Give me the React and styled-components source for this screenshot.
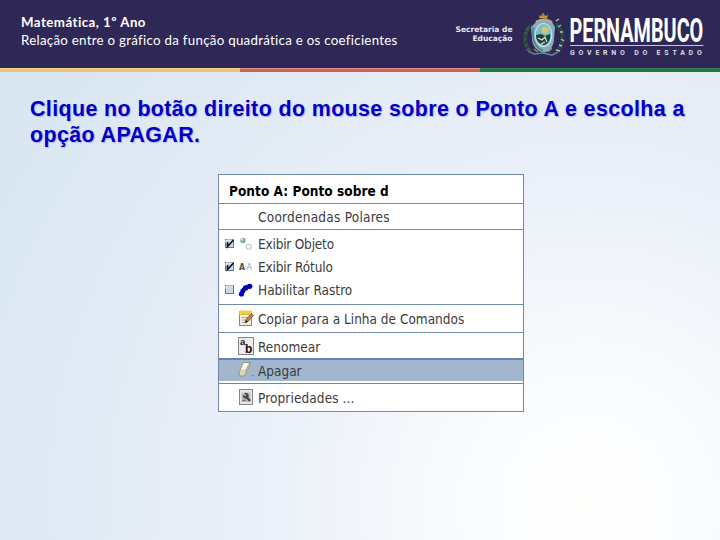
import styled, { createGlobalStyle } from "styled-components";

const GlobalStyle = createGlobalStyle`
	* {
		box-sizing: border-box;
	}
	body {
		margin: 0;
	}
`;

const Slide = styled.div`
	display: flex;
	flex-direction: column;
	width: 720px;
	height: 540px;
	overflow: hidden;
	background: radial-gradient(
		circle at 588px 503px,
		#fffefc 0,
		#fefefe 20px,
		#fcfdfe 80px,
		#f8fafc 150px,
		#f2f5fb 230px,
		#e9eff8 350px,
		#e2ebf5 500px,
		#d8e6f2 700px
	);
`;

const Header = styled.header`
	display: flex;
	justify-content: space-between;
	height: 68px;
	background: #2f2755;
`;

const Heading = styled.div`
	padding: 13px 0 0 21px;
	font-family: Lato, sans-serif;
	color: #fff;
`;

const HeadingLine = styled.p`
	margin: 0;
	font-size: 13.3px;
	line-height: 18px;
	font-weight: ${({ $bold }) => ($bold ? 700 : 400)};
	letter-spacing: ${({ $spacing }) => $spacing}px;
	white-space: nowrap;
`;

const Logo = styled.svg`
	display: block;
	width: 280px;
	height: 68px;
`;

const Stripe = styled.div`
	display: grid;
	grid-template-columns: repeat(3, 1fr);
	height: 4px;
`;

const StripePart = styled.div`
	border-top: 1px solid ${({ $edge }) => $edge};
	background: ${({ $color }) => $color};
`;

const Instruction = styled.p`
	margin: 24px 0 0 30px;
	font-family: "Liberation Sans", Arial, sans-serif;
	font-size: 21.4px;
	font-weight: bold;
	line-height: 26px;
	letter-spacing: 0.4px;
	color: #0000c4;
	text-shadow: 1px 1px 1px #b4b4f4;
	white-space: nowrap;
`;

const Menu = styled.div`
	width: 306px;
	height: 238px;
	margin: 26px 0 0 218px;
	border: 1px solid #7188a6;
	background: #fff;
	font-family: "DejaVu Sans Condensed", "DejaVu Sans", sans-serif;
	font-stretch: condensed;
	font-size: 13.5px;
	color: #3c3c3c;
`;

const MenuTitle = styled.div`
	height: 28px;
	padding: 4px 0 0 10px;
	line-height: 25px;
	font-weight: bold;
	font-size: 13.5px;
	letter-spacing: 0.05px;
	color: #000;
`;

const Group = styled.div`
	height: ${({ $height }) => $height}px;
	padding-top: ${({ $top }) => $top || 0}px;
	border-top: 1px solid #7188a6;
`;

const MenuItem = styled.div`
	display: grid;
	grid-template-columns: 13px 20px 1fr;
	align-items: center;
	height: ${({ $height }) => $height || 23}px;
	padding-left: 6px;
	border-top: ${({ $selected }) => ($selected ? "2px solid #6482b4" : "0")};
	background: ${({ $selected }) => ($selected ? "#a2b6cd" : "transparent")};
`;

const Label = styled.span`
	letter-spacing: ${({ $spacing }) => $spacing || 0}px;
	white-space: nowrap;
`;

const Icon = styled.svg`
	display: block;
	overflow: visible;
`;

function Checkbox({ checked }) {
	return (
		<Icon width="10" height="10" viewBox="0 0 10 10">
			<rect x="0.5" y="0.5" width="8" height="8" fill="#cbd8e6" stroke="#65788e" />
			<path d="M1 4V1h7" fill="none" stroke="#eef4fa" />
			{checked && <path d="M2.5 3v4.5L8.5 1" fill="none" stroke="#15171c" strokeWidth="1.7" />}
		</Icon>
	);
}

function ObjectIcon() {
	return (
		<Icon width="16" height="16" viewBox="-1 0 16 16">
			<circle cx="4" cy="4.5" r="2.7" fill="#86a6a6" />
			<circle cx="3.2" cy="3.6" r="1.2" fill="#d9e8e8" />
			<circle cx="9.8" cy="10.8" r="2.5" fill="#fff" stroke="#bfc4bf" strokeWidth="1.1" />
		</Icon>
	);
}

function LabelIcon() {
	return (
		<Icon width="16" height="16" viewBox="0 0 16 16" fontFamily="DejaVu Sans" fontSize="9">
			<text x="1" y="11" fontWeight="bold" fill="#505050" textLength="6" lengthAdjust="spacingAndGlyphs">A</text>
			<text x="8.5" y="11" fill="#a6a6a6" textLength="5.5" lengthAdjust="spacingAndGlyphs">A</text>
		</Icon>
	);
}

function TraceIcon() {
	return (
		<Icon width="16" height="16" viewBox="0 0 16 16">
			<path d="M3.5 12l1.500-3.500 3-3 3.500-1.500" fill="none" stroke="#0000b4" strokeWidth="4" />
			<g fill="#0000b4">
				<circle cx="3.5" cy="12" r="2.6" />
				<circle cx="4.9" cy="8.9" r="2.5" />
				<circle cx="7.6" cy="5.9" r="2.7" />
				<circle cx="11.8" cy="4.3" r="2.6" />
			</g>
		</Icon>
	);
}

function NotepadIcon() {
	return (
		<Icon width="17" height="18" viewBox="0 1 17 18">
			<rect x="1.5" y="3.5" width="12" height="13" fill="#f3efe4" stroke="#8d8573" />
			<rect x="1" y="2" width="13" height="4" fill="#e3b93c" />
			<path d="M2.5 1v4M5 1v4M7.5 1v4M10 1v4M12.5 1v4" stroke="#f7dc62" strokeWidth="1.2" />
			<path d="M3.5 8.5h7M3.5 11h4M3.5 13.5h3" stroke="#aaa69a" />
			<path d="M7 14l1-3.5L13.5 4.5l2 2L10 12.5z" fill="#c28a3e" stroke="#5d4321" strokeWidth="0.8" />
			<path d="M7 14l1-3 2 1.5z" fill="#302a24" />
		</Icon>
	);
}

function RenameIcon() {
	return (
		<Icon width="16" height="18" viewBox="0 1 16 18" fontFamily="Liberation Sans" fontWeight="bold" fill="#111">
			<rect x="0.5" y="0.5" width="15" height="17" fill="#ececec" stroke="#858585" />
			<text x="2" y="7.5" fontSize="9.5">a</text>
			<text x="7" y="15.5" fontSize="12">b</text>
		</Icon>
	);
}

function EraserIcon() {
	return (
		<Icon width="17" height="17" viewBox="0 1 17 17">
			<path d="M5.5 1.5h6.5l-1 4.5-4.5 9H1l.5-4.5z" fill="#d8d8b4" stroke="#8c8c70" strokeWidth="0.8" />
			<path d="M5.7 2h5.3l-3 6.5H2.8z" fill="#f7f7ec" />
			<path d="M7.5 8.5L11 2l-.7 4L6 14z" fill="#b4b48c" />
			<path d="M13 14.5h3" stroke="#7e92ab" />
		</Icon>
	);
}

function PropertiesIcon() {
	return (
		<Icon width="16" height="17" viewBox="0 0 16 17">
			<rect x="1.5" y="0.5" width="13" height="15" fill="#e8e8e8" stroke="#858585" />
			<rect x="3.5" y="3.5" width="9" height="9.5" fill="#c2c2c2" />
			<circle cx="7.7" cy="6.8" r="3" fill="#505050" />
			<path d="M8 7.5l4 4.5" stroke="#454545" strokeWidth="2.4" />
			<path d="M5 4.5l2.5 2" stroke="#dcdcdc" strokeWidth="1.4" />
			<path d="M4 11.5h4" stroke="#7c7c7c" strokeWidth="1.5" />
		</Icon>
	);
}

function Crest() {
	return (
		<g>
			<path d="M91 25C84 31 83 43 90 51M116 24C124 31 125 43 117 51" fill="none" stroke="#29463f" strokeWidth="4" />
			<path
				d="M89 27l-3 3M87 32l-3 2M86 38l-2 3M87 44l-2 2M90 49l-4 1"
				stroke="#49654a"
				strokeWidth="1.3"
			/>
			<path
				d="M116 21l3-2M118 27l3-2M120 32l3 0M121 39l3 2M119 45l3 1M116 50l4 1"
				stroke="#b0bfc6"
				strokeWidth="1.4"
			/>
			<path d="M96 22c2-4 13-4 16 0l3 5-1 12c0 7-4 12-10 14-7-2-12-7-12-15l-1-11z" fill="#85aeba" />
			<path d="M96 22c2-3 13-3 16 0" fill="none" stroke="#c3ae70" strokeWidth="1.6" />
			<path d="M93 27v10c1 7 4 11 10 14" fill="none" stroke="#557f79" strokeWidth="1.5" />
			<ellipse cx="103.5" cy="35" rx="8.3" ry="11.5" fill="#6fc0d4" stroke="#cfded9" strokeWidth="1.2" />
			<circle cx="105" cy="30" r="3.5" fill="#d8c763" />
			<path d="M96 35l5-1 4 2 5-2c1 6-2 10-6 11-5-1-8-4-8-10z" fill="#263f3c" />
			<path d="M98 38l4 2 3-3 2 5M101 44l4-2" fill="none" stroke="#dce8e5" strokeWidth="1.2" />
			<path d="M99 18l1-3 2 1 1-3 2 3 3-1-1 4z" fill="#b99747" />
			<circle cx="103" cy="14.5" r="1.3" fill="#b9673f" />
			<path d="M88 51l6 3 9-1 9 2 6-3" fill="none" stroke="#5f8390" strokeWidth="1.7" />
			<path d="M94 49l4 3M112 48l-4 4" stroke="#a3985b" strokeWidth="1.3" />
		</g>
	);
}

function GovernmentLogo() {
	return (
		<Logo viewBox="0 0 280 68">
			<g fontFamily="DejaVu Sans" fontWeight="bold" fontSize="7.6" fill="#e9e7f3">
				<text x="15.5" y="31.5" textLength="57" lengthAdjust="spacingAndGlyphs">Secretaria de</text>
				<text x="32.5" y="41" textLength="40" lengthAdjust="spacingAndGlyphs">Educação</text>
			</g>
			<Crest />
			<text
				transform="translate(129.5 41.5) scale(0.64 1)"
				textLength="209"
				lengthAdjust="spacingAndGlyphs"
				fontFamily="Roboto"
				fontWeight="bold"
				fontSize="33"
				fill="#fff"
			>
				PERNAMBUCO
			</text>
			<path d="M130 45.5h133.5" stroke="#c9c2de" />
			<text
				x="130"
				y="54.5"
				fontFamily="Roboto"
				fontWeight="bold"
				fontSize="7"
				letterSpacing="3.77"
				fill="#dedbea"
			>
				GOVERNO DO ESTADO
			</text>
		</Logo>
	);
}

export default function App() {
	return (
		<Slide>
			<GlobalStyle />
			<Header>
				<Heading>
					<HeadingLine $bold $spacing={0.45}>Matemática, 1º Ano</HeadingLine>
					<HeadingLine $spacing={0.28}>Relação entre o gráfico da função quadrática e os coeficientes</HeadingLine>
				</Heading>
				<GovernmentLogo />
			</Header>
			<Stripe>
				<StripePart $color="#f0c070" $edge="#f3cf93" />
				<StripePart $color="#cb6359" $edge="#e3958c" />
				<StripePart $color="#1c7a3f" $edge="#3f7a64" />
			</Stripe>
			<Instruction>
				Clique no botão direito do mouse sobre o Ponto A e escolha a
				<br />
				opção APAGAR.
			</Instruction>
			<Menu>
				<MenuTitle>Ponto A: Ponto sobre d</MenuTitle>
				<Group $height={26}>
					<MenuItem $height={25}>
						<span />
						<span />
						<Label $spacing={0.24}>Coordenadas Polares</Label>
					</MenuItem>
				</Group>
				<Group $height={75} $top={2}>
					<MenuItem>
						<Checkbox checked />
						<ObjectIcon />
						<Label $spacing={-0.2}>Exibir Objeto</Label>
					</MenuItem>
					<MenuItem>
						<Checkbox checked />
						<LabelIcon />
						<Label $spacing={-0.15}>Exibir Rótulo</Label>
					</MenuItem>
					<MenuItem $height={24}>
						<Checkbox />
						<TraceIcon />
						<Label>Habilitar Rastro</Label>
					</MenuItem>
				</Group>
				<Group $height={28} $top={2}>
					<MenuItem>
						<span />
						<NotepadIcon />
						<Label>Copiar para a Linha de Comandos</Label>
					</MenuItem>
				</Group>
				<Group $height={51} $top={2}>
					<MenuItem>
						<span />
						<RenameIcon />
						<Label>Renomear</Label>
					</MenuItem>
					<MenuItem $selected>
						<span />
						<EraserIcon />
						<Label>Apagar</Label>
					</MenuItem>
				</Group>
				<Group $height={28} $top={2}>
					<MenuItem>
						<span />
						<PropertiesIcon />
						<Label $spacing={0.1}>Propriedades ...</Label>
					</MenuItem>
				</Group>
			</Menu>
		</Slide>
	);
}
